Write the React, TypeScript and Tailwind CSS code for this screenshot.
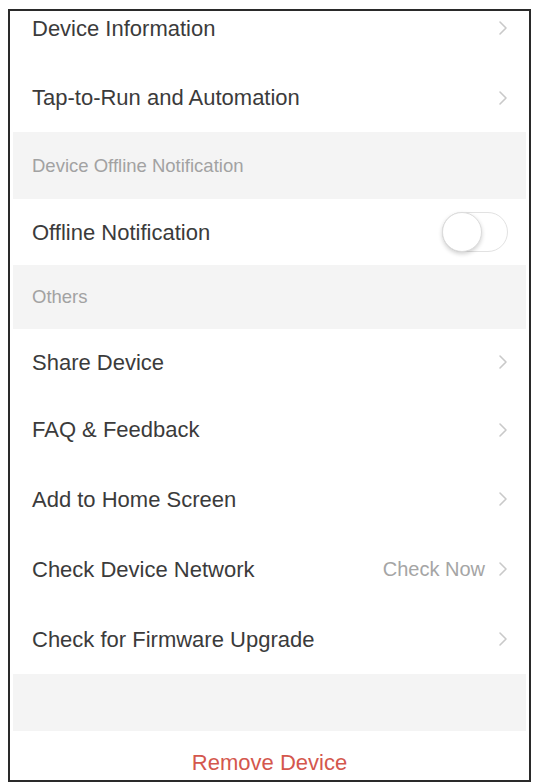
import React from "react";

const Chevron = () => (
  <svg width="10" height="16" viewBox="0 0 10 16" fill="none" className="shrink-0">
    <path d="M2 2 L8 8 L2 14" stroke="#c9c9c9" strokeWidth="1.6" strokeLinecap="round" strokeLinejoin="round" />
  </svg>
);

const Row = ({ label, right, h, extra = "" }: { label: string; right?: React.ReactNode; h: string; extra?: string }) => (
  <div className={`flex items-center justify-between bg-white pl-[19px] pr-[18px] ${h} ${extra}`}>
    <span className="text-[22px] text-[#3b3b3b]">{label}</span>
    {right ?? <Chevron />}
  </div>
);

const Header = ({ label, h }: { label: string; h: string }) => (
  <div className={`flex items-center bg-[#f4f4f4] pl-[19px] ${h}`}>
    <span className="text-[18.5px] text-[#a2a2a2]">{label}</span>
  </div>
);

export default function App() {
  return (
    <div className="w-[534px] h-[782px] bg-white pl-[8px] pt-[9px] pr-[3px]" style={{ fontFamily: '"Liberation Sans", Arial, sans-serif' }}>
      <div className="h-full border-x-2 border-t-2 border-b-2 border-[#2a2a2a] overflow-hidden px-[3px] flex flex-col">
        <Row label="Device Information" h="h-[52px] shrink-0" extra="pb-[18px]" />
        <Row label="Tap-to-Run and Automation" h="h-[69px] shrink-0" />
        <Header label="Device Offline Notification" h="h-[67px] shrink-0" />
        <Row
          label="Offline Notification"
          h="h-[66px] shrink-0"
          extra="pr-[12px]"
          right={
            <div className="relative w-[66px] h-[40px] rounded-full border border-[#e2e2e2] bg-white">
              <div className="absolute left-[-1px] top-[-1px] w-[40px] h-[40px] rounded-full bg-white border border-[#dcdcdc] shadow-[0_2px_4px_rgba(0,0,0,0.18)]" />
            </div>
          }
        />
        <Header label="Others" h="h-[64px] shrink-0" />
        <Row label="Share Device" h="h-[66px] shrink-0" />
        <Row label="FAQ & Feedback" h="h-[69px] shrink-0" />
        <Row label="Add to Home Screen" h="h-[70px] shrink-0" />
        <Row
          label="Check Device Network"
          h="h-[70px] shrink-0"
          right={
            <div className="flex items-center gap-[13px]">
              <span className="text-[20px] text-[#a5a5a5]">Check Now</span>
              <Chevron />
            </div>
          }
        />
        <Row label="Check for Firmware Upgrade" h="h-[70px] shrink-0" />
        <div className="h-[57px] bg-[#f4f4f4] shrink-0" />
        <div className="flex justify-center bg-white pt-[15px] shrink-0">
          <span className="text-[22px] text-[#d4574d]">Remove Device</span>
        </div>
      </div>
    </div>
  );
}
